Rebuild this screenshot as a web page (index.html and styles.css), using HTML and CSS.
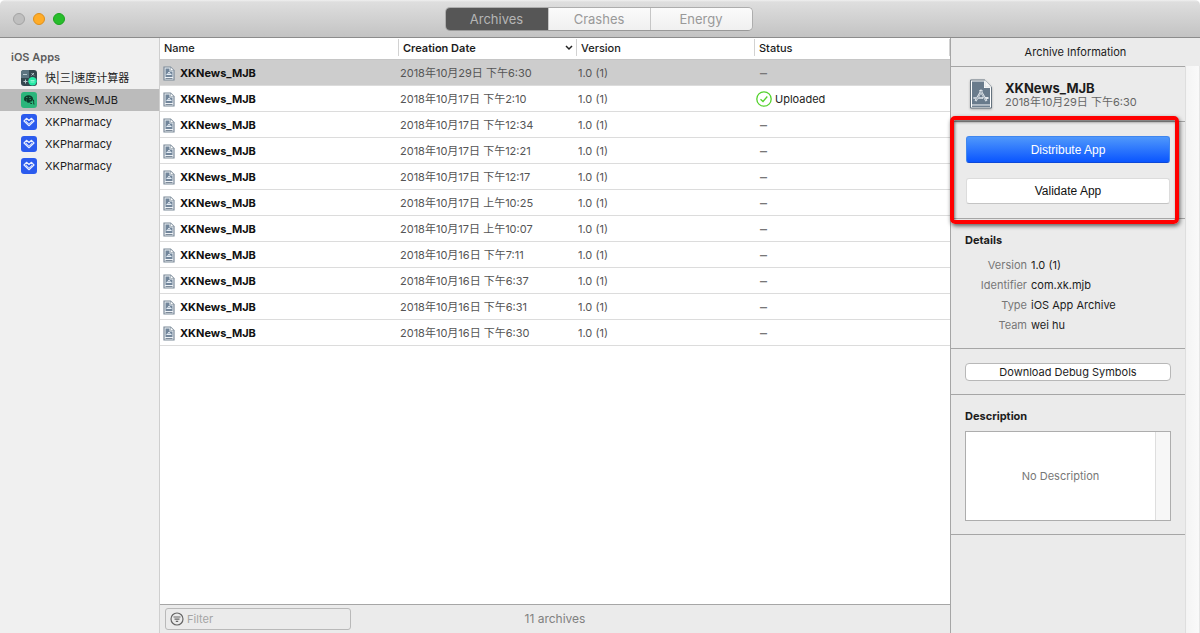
FILE: index.html
```html
<!DOCTYPE html>
<html lang="en">
<head>
<meta charset="utf-8">
<title>Archives</title>
<link rel="stylesheet" href="styles.css">
</head>
<body>
<svg class="defs" aria-hidden="true">
  <symbol id="doc" viewBox="0 0 12 15">
    <path d="M1 1h6.500l3.500 3.500v9.500H1z" fill="#eef2f6" stroke="#7b8998" stroke-width="1.200"/>
    <path d="M7.500 1v3.500H11z" fill="#fff" stroke="#8795a3" stroke-width=".6"/>
    <path d="M2.500 2.500h4v3h3V11h-7z" fill="#71859a"/>
    <path d="M4 9 6 6l2 3M3.500 8.500h5" fill="none" stroke="#e6eef6" stroke-width="1"/>
    <path d="M2.500 12.500h7" stroke="#7b8998"/>
  </symbol>
  <symbol id="heart" viewBox="0 0 16 16">
    <rect width="16" height="16" rx="3" fill="#2b5bee"/>
    <path d="M5 7 8 9.500 11 7M8 6.500 5.500 4.300 3 7l5 4.700L13 7l-2.500-2.700z" fill="none" stroke="#e9efff" stroke-width="1.200" stroke-linejoin="round"/>
    <path d="M5 6.800h1.500L8 8.200l1.500-1.400H11L8 9.400z" fill="#2b5bee"/>
  </symbol>
</svg>
<div class="window">
  <header class="titlebar">
    <div class="lights">
      <button class="light" aria-label="Close"></button>
      <button class="light light-amber" aria-label="Minimize"></button>
      <button class="light light-green" aria-label="Zoom"></button>
    </div>
    <nav class="segments">
      <button class="segment segment-on">Archives</button>
      <button class="segment">Crashes</button>
      <button class="segment">Energy</button>
    </nav>
  </header>
  <div class="body">
    <aside class="sidebar">
      <h2 class="sidebar-title">iOS Apps</h2>
      <ul class="apps">
        <li class="app"><svg class="app-icon" viewBox="0 0 16 16"><rect width="16" height="16" rx="3" fill="#34474f"/><path d="M0 3a3 3 0 0 1 3-3h5v8H0z" fill="#5c7480"/><path d="M2 4.500h4M10.500 3l2.500 2.500M13 3l-2.500 2.500M2.500 11.500h4M4.500 9.500v4" stroke="#b8c8ce"/><circle cx="11.500" cy="11.300" r="4.200" fill="#24e9a5"/><path d="M9.500 10.500h4M9.500 12h4" stroke="#8ff5d1"/></svg>快|三|速度计算器</li>
        <li class="app app-on"><svg class="app-icon" viewBox="0 0 16 16"><rect width="16" height="16" rx="3" fill="#2bb57b"/><path d="M3 7c0-5 9-5 9 0 0 2-2 3-3 2.500C8 11.500 6 11 6 9.500 4 10 3 8.500 3 7z" fill="#0d3b2b"/><path d="M4.500 6.500h5M7 4v5M9 8c-1 2 0 4 2 3.500M11.500 7c2 1 .5 3 1.500 5.500" fill="none" stroke="#0d3b2b"/><path d="M5 5.500h1.500M8 5.500h1.500M5 8h1M8.500 7.500H10" stroke="#3bab7d" stroke-width=".7"/></svg>XKNews_MJB</li>
        <li class="app"><svg class="app-icon"><use href="#heart"/></svg>XKPharmacy</li>
        <li class="app"><svg class="app-icon"><use href="#heart"/></svg>XKPharmacy</li>
        <li class="app"><svg class="app-icon"><use href="#heart"/></svg>XKPharmacy</li>
      </ul>
    </aside>
    <main class="main">
      <div class="list">
        <table class="archives">
          <colgroup><col class="col-name"><col class="col-date"><col class="col-version"><col></colgroup>
          <thead>
            <tr>
              <th><span class="head">Name</span></th>
              <th><span class="head head-sorted">Creation Date<svg class="chevron" viewBox="0 0 8 6"><path d="M1 1l3 3 3-3" fill="none" stroke="#222" stroke-width="1.500"/></svg></span></th>
              <th><span class="head">Version</span></th>
              <th><span class="head">Status</span></th>
            </tr>
          </thead>
          <tbody>
            <tr class="row-on"><td class="name"><svg class="doc"><use href="#doc"/></svg>XKNews_MJB</td><td>2018年10月29日 下午6:30</td><td>1.0 (1)</td><td class="none">–</td></tr>
            <tr><td class="name"><svg class="doc"><use href="#doc"/></svg>XKNews_MJB</td><td>2018年10月17日 下午2:10</td><td>1.0 (1)</td><td class="uploaded"><svg class="check" viewBox="0 0 16 16"><circle cx="8" cy="8" r="7.200" fill="none" stroke="#54d22d" stroke-width="1.300"/><path d="M4.500 8.200 7 10.500l4.300-5" fill="none" stroke="#54d22d" stroke-width="1.300"/></svg>Uploaded</td></tr>
            <tr><td class="name"><svg class="doc"><use href="#doc"/></svg>XKNews_MJB</td><td>2018年10月17日 下午12:34</td><td>1.0 (1)</td><td class="none">–</td></tr>
            <tr><td class="name"><svg class="doc"><use href="#doc"/></svg>XKNews_MJB</td><td>2018年10月17日 下午12:21</td><td>1.0 (1)</td><td class="none">–</td></tr>
            <tr><td class="name"><svg class="doc"><use href="#doc"/></svg>XKNews_MJB</td><td>2018年10月17日 下午12:17</td><td>1.0 (1)</td><td class="none">–</td></tr>
            <tr><td class="name"><svg class="doc"><use href="#doc"/></svg>XKNews_MJB</td><td>2018年10月17日 上午10:25</td><td>1.0 (1)</td><td class="none">–</td></tr>
            <tr><td class="name"><svg class="doc"><use href="#doc"/></svg>XKNews_MJB</td><td>2018年10月17日 上午10:07</td><td>1.0 (1)</td><td class="none">–</td></tr>
            <tr><td class="name"><svg class="doc"><use href="#doc"/></svg>XKNews_MJB</td><td>2018年10月16日 下午7:11</td><td>1.0 (1)</td><td class="none">–</td></tr>
            <tr><td class="name"><svg class="doc"><use href="#doc"/></svg>XKNews_MJB</td><td>2018年10月16日 下午6:37</td><td>1.0 (1)</td><td class="none">–</td></tr>
            <tr><td class="name"><svg class="doc"><use href="#doc"/></svg>XKNews_MJB</td><td>2018年10月16日 下午6:31</td><td>1.0 (1)</td><td class="none">–</td></tr>
            <tr><td class="name"><svg class="doc"><use href="#doc"/></svg>XKNews_MJB</td><td>2018年10月16日 下午6:30</td><td>1.0 (1)</td><td class="none">–</td></tr>
          </tbody>
        </table>
      </div>
      <footer class="footer">
        <label class="filter">
          <svg class="filter-icon" viewBox="0 0 14 14"><circle cx="7" cy="7" r="6" fill="none" stroke="#666" stroke-width="1.200"/><path d="M3.500 5h7M4.500 7.200h5M5.800 9.400h2.400" stroke="#666" stroke-width="1.200"/></svg>
          <input class="filter-input" type="text" placeholder="Filter" aria-label="Filter">
        </label>
        <span class="count">11 archives</span>
      </footer>
    </main>
    <aside class="inspector">
      <h2 class="inspector-title">Archive Information</h2>
      <div class="inspector-scroll">
        <div class="inspector-content">
          <section class="section summary">
            <svg class="summary-icon" viewBox="0 0 24 30">
              <path d="M1.500 1H16l6.500 7v21h-21z" fill="#fff" stroke="#65737f"/>
              <path d="M3 2.500h12V9h6v16.500H3z" fill="#697b8c"/>
              <path d="M16 1v7h6.500z" fill="#f5f6f7" stroke="#c3c8cd" stroke-width=".5"/>
              <path d="M3 27.200h18" stroke="#697b8c" stroke-width="1.500"/>
              <path d="M6.500 22 13 11M11 11l6.500 11M4.500 19H14M16 19h3.500" fill="none" stroke="#e4e9ee" stroke-width="2.200"/>
              <path d="M7 21.500l6-10M11.500 12l5.500 9.500M5 19h8.500" fill="none" stroke="#8696a5" stroke-width=".7"/>
            </svg>
            <div>
              <h3 class="summary-name">XKNews_MJB</h3>
              <p class="summary-date">2018年10月29日 下午6:30</p>
            </div>
          </section>
          <section class="section actions">
            <button class="button button-primary">Distribute App</button>
            <button class="button">Validate App</button>
            <div class="highlight"></div>
          </section>
          <section class="section details">
            <h3 class="section-title">Details</h3>
            <dl class="facts">
              <dt>Version</dt><dd>1.0 (1)</dd>
              <dt>Identifier</dt><dd>com.xk.mjb</dd>
              <dt>Type</dt><dd>iOS App Archive</dd>
              <dt>Team</dt><dd>wei hu</dd>
            </dl>
          </section>
          <section class="section symbols">
            <button class="button-small">Download Debug Symbols</button>
          </section>
          <section class="section description">
            <h3 class="section-title">Description</h3>
            <div class="note">
              <textarea class="note-text" placeholder="No Description" aria-label="Description"></textarea>
              <div class="note-track"></div>
            </div>
          </section>
        </div>
        <div class="track"></div>
      </div>
    </aside>
  </div>
</div>
</body>
</html>
```
FILE: styles.css
```css
* { box-sizing: border-box; }

body, h2, h3, p, ul, dl, dd { margin: 0; padding: 0; }

body, button, input, textarea {
  font-family: Inter, "Noto Sans CJK SC", sans-serif;
  font-size: 11px;
  line-height: 16px;
  color: #1c1c1c;
}

button { padding: 0; border: 0; }
svg { flex: none; display: block; }
.defs { position: absolute; width: 0; height: 0; }

.window { display: flex; flex-direction: column; height: 100vh; }

.titlebar {
  display: grid;
  grid-template-columns: 1fr auto 1fr;
  flex: none;
  height: 38px;
  padding: 0 16px 0 13px;
  align-items: center;
  background: linear-gradient(#f0f0f0 0, #dedede 2px, #c3c3c3);
  border-bottom: 1px solid #8c8c8c;
  border-radius: 5px 5px 0 0;
}
.lights { display: flex; gap: 8px; }
.light { width: 12px; height: 12px; border: 1px solid #a3a3a3; border-radius: 50%; background: #bfbfbf; }
.light-amber { background: #ffac28; border-color: #dd8f1c; }
.light-green { background: #28bd2c; border-color: #1ba31f; }

.segments { display: flex; border: 1px solid #adadad; border-bottom-color: #999; border-radius: 5px; overflow: hidden; }
.segment {
  width: 102px;
  height: 22px;
  font-size: 13px;
  color: #999;
  background: linear-gradient(#fbfbfb, #f0f0f0);
  border-left: 1px solid #c6c6c6;
}
.segment-on { color: #b5b5b5; background: #565656; border-left: 0; }

.body { display: flex; flex: 1; min-height: 0; }

.sidebar { flex: none; width: 160px; padding-top: 11px; background: #f0f0f0; border-right: 1px solid #cfcfcf; }
.sidebar-title { padding-left: 11px; font-size: 11px; font-weight: 600; color: #5c5c5c; height: 18px; }
.apps { list-style: none; }
.app { display: flex; align-items: center; gap: 8px; height: 22px; padding-left: 21px; white-space: nowrap; }
.app-on { background: #bbb; }
.app-icon { width: 16px; height: 16px; }

.main { display: flex; flex-direction: column; flex: 1; min-width: 0; }
.list { flex: 1; min-height: 0; overflow: hidden; background: #fff; }
.archives { width: 100%; table-layout: fixed; border-collapse: separate; border-spacing: 0; }
.col-name { width: 239px; }
.col-date, .col-version { width: 178px; }

.archives th { height: 22px; padding: 1px 0 3px; border-bottom: 1px solid #c6c6c6; font-weight: 500; text-align: left; }
.head { display: flex; align-items: center; height: 17px; padding: 0 4px; border-right: 1px solid #d2d2d2; }
.head-sorted { justify-content: space-between; padding-right: 3px; font-weight: 600; }
.chevron { width: 8px; height: 6px; }

.archives td { height: 26px; padding: 0 0 0 1px; border-bottom: 1px solid #dcdcdc; color: #555; white-space: nowrap; }
.archives .row-on td { background: #cdcdcd; }
.archives .name { padding-left: 3px; font-weight: 700; color: #111; }
.doc { display: inline-block; width: 12px; height: 15px; margin-right: 5px; vertical-align: -4px; }
.archives .none { padding-left: 5px; font-size: 14px; font-weight: 500; color: #777; }
.archives .uploaded { color: #222; }
.check { display: inline-block; width: 16px; height: 16px; margin-right: 3px; vertical-align: -4px; }

.footer { display: grid; grid-template-columns: 1fr auto 1fr; flex: none; align-items: center; height: 29px; padding: 0 5px; background: #ebebeb; border-top: 1px solid #a6a6a6; }
.filter { display: flex; align-items: center; gap: 3px; width: 186px; height: 22px; padding: 0 4px; border: 1px solid #b9b9b9; border-radius: 3px; }
.filter-icon { width: 14px; height: 14px; }
.filter-input { width: 100%; min-width: 0; padding: 0; border: 0; background: transparent; outline: 0; }
.filter-input::placeholder { color: #a5a5a5; opacity: 1; }
.count { font-size: 12px; color: #808080; }

.inspector { display: flex; flex-direction: column; flex: none; width: 250px; background: #ebebeb; border-left: 1px solid #a6a6a6; }
.inspector-title { height: 28px; font-size: 11px; line-height: 28px; font-weight: 400; text-align: center; }
.inspector-scroll { display: flex; flex: 1; min-height: 0; }
.inspector-content { flex: 1; min-width: 0; border-top: 1px solid #a6a6a6; }
.track { width: 15px; border-left: 1px solid #dedede; border-right: 1px solid #e6e6e6; background: linear-gradient(90deg, #f4f4f4, #fafafa); }

.section { border-bottom: 1px solid #a6a6a6; padding: 0 14px; }
.summary { display: flex; align-items: center; gap: 12px; height: 55px; padding-left: 18px; }
.summary-icon { width: 24px; height: 30px; filter: drop-shadow(0 1px 1px #aaa); }
.summary-name { padding-top: 2px; font-size: 13px; line-height: 14px; font-weight: 700; }
.summary-date { line-height: 14px; color: #666; }

.actions { position: relative; display: flex; flex-direction: column; gap: 15px; padding: 14px 15px; }
.button { height: 26px; font-family: "Liberation Sans", Arial, sans-serif; font-size: 12px; color: #111; background: #fff; border: 1px solid #dcdcdc; border-bottom-color: #c4c4c4; border-radius: 3px; }
.button-primary { height: 27px; color: #fff; background: linear-gradient(#4f98fb, #0a55ff); border: 1px solid #3f86ef; border-bottom-color: #0c48d8; }
.highlight { position: absolute; inset: -6px 6px -6px -1px; border: 4px solid #f00; border-radius: 5px; box-shadow: 1px 2px 4px rgba(0, 0, 0, .6), inset 1px 2px 3px rgba(0, 0, 0, .5); pointer-events: none; }

.details { padding-top: 13px; padding-bottom: 13px; }
.section-title { font-size: 11px; font-weight: 700; }
.facts { display: grid; grid-template-columns: 62px 1fr; column-gap: 4px; margin-top: 7px; line-height: 20px; }
.facts dt { text-align: right; color: #777; }

.symbols { display: flex; padding-top: 14px; padding-bottom: 13px; }
.button-small { flex: 1; height: 18px; background: #fff; border: 1px solid #b8b8b8; border-radius: 4px; }

.description { padding-top: 13px; padding-bottom: 13px; }
.note { display: flex; height: 90px; margin-top: 7px; background: #fff; border: 1px solid #adadad; }
.note-text { flex: 1; min-width: 0; padding: 36px 0; border: 0; background: transparent; text-align: center; resize: none; outline: 0; }
.note-text::placeholder { color: #777; opacity: 1; }
.note-track { width: 15px; border-left: 1px solid #dedede; background: #f7f7f7; }
```
